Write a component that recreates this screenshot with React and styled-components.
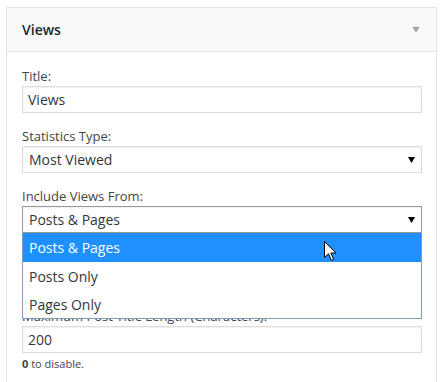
import React from "react";
import styled, { createGlobalStyle } from "styled-components";

const GlobalStyle = createGlobalStyle`
  html, body {
    margin: 0;
    padding: 0;
    background: #ffffff;
  }
  body {
    font-family: "Open Sans", "Noto Sans", sans-serif;
    color: #32373c;
    overflow: hidden;
  }
`;

const Caret = ({ color = "#000", width = 7, height = 6 }) => (
  <svg width={width} height={height} viewBox="0 0 7 6" aria-hidden="true">
    <path d="M0 0 H7 L3.5 6 Z" fill={color} />
  </svg>
);

const Pointer = () => (
  <svg width="13" height="21" viewBox="0 0 13 21" aria-hidden="true">
    <path
      d="M0.5 0.5 V16.5 L4.5 12.8 L7.3 19.5 L9.6 18.5 L6.9 12 H12 Z"
      fill="#ffffff"
      stroke="#000000"
      strokeWidth="1"
    />
  </svg>
);

export default function App() {
  const options = ["Posts & Pages", "Posts Only", "Pages Only"];
  return (
    <>
      <GlobalStyle />
      <Widget>
        <Header>
          <HeaderTitle>Views</HeaderTitle>
          <Caret color="#a0a5aa" width={8} height={6} />
        </Header>
        <Body>
          <Field>
            <Label>Title:</Label>
            <TextInput>Views</TextInput>
          </Field>
          <Field>
            <Label>Statistics Type:</Label>
            <Select>
              <span>Most Viewed</span>
              <Caret />
            </Select>
          </Field>
          <Field>
            <Label>Include Views From:</Label>
            <SelectWrap>
              <Select $focused>
                <span>Posts &amp; Pages</span>
                <Caret />
              </Select>
              <Dropdown>
                {options.map((o, i) => (
                  <Option key={o} $active={i === 0}>
                    {o}
                  </Option>
                ))}
                <CursorSpot>
                  <Pointer />
                </CursorSpot>
              </Dropdown>
            </SelectWrap>
          </Field>
          {/* covered by the open dropdown */}
          <Field $covered>
            <Label>No. Of Records To Show:</Label>
            <TextInput>10</TextInput>
          </Field>
          <Field>
            <Label>Maximum Post Title Length (Characters):</Label>
            <TextInput>200</TextInput>
            <Hint>
              <b>0</b> to disable.
            </Hint>
          </Field>
        </Body>
      </Widget>
    </>
  );
}

const Widget = styled.div`
  margin: 7px 0 0 6px;
  width: 431px;
  box-sizing: border-box;
  border: 1px solid #e5e5e5;
  background: #ffffff;
`;

const Header = styled.div`
  height: 43px;
  display: flex;
  align-items: center;
  justify-content: space-between;
  padding: 0 16px 0 15px;
  background: #f9f9f9;
  border-bottom: 1px solid #e5e5e5;
`;

const HeaderTitle = styled.h3`
  margin: 0;
  font-size: 14px;
  font-weight: 600;
  color: #23282d;
  line-height: 19px;
`;

const Body = styled.div`
  padding: 15px 14px 40px 15px;
`;

const Field = styled.div`
  margin-bottom: 14px;
  visibility: ${(p) => (p.$covered ? "hidden" : "visible")};
`;

const Label = styled.label`
  display: block;
  font-size: 13px;
  line-height: 19px;
  color: #444444;
`;

const TextInput = styled.div`
  height: 27px;
  box-sizing: border-box;
  border: 1px solid #dddddd;
  box-shadow: inset 0 1px 2px rgba(0, 0, 0, 0.07);
  padding: 0 5px;
  font-size: 14px;
  line-height: 25px;
  color: #32373c;
`;

const SelectWrap = styled.div`
  position: relative;
`;

const Select = styled.div`
  height: 27px;
  box-sizing: border-box;
  display: flex;
  align-items: center;
  justify-content: space-between;
  border: 1px solid ${(p) => (p.$focused ? "#999999" : "#dddddd")};
  box-shadow: inset 0 1px 2px rgba(0, 0, 0, 0.07);
  padding: 0 6px;
  font-size: 14px;
  color: #32373c;
`;

const Dropdown = styled.ul`
  position: absolute;
  top: 100%;
  left: 0;
  right: 0;
  margin: -1px 0 0;
  padding: 0;
  list-style: none;
  background: #ffffff;
  border: 1px solid #7f9db9;
  border-top: 1px solid #999999;
  z-index: 10;
`;

const Option = styled.li`
  height: 28px;
  display: flex;
  align-items: center;
  padding: 0 6px;
  font-size: 14px;
  color: ${(p) => (p.$active ? "#ffffff" : "#32373c")};
  background: ${(p) => (p.$active ? "#1e90ff" : "transparent")};
  &:first-child {
    height: 29px;
  }
`;

const CursorSpot = styled.div`
  position: absolute;
  left: 301px;
  top: 8px;
  line-height: 0;
`;

const Hint = styled.p`
  margin: 3px 0 0;
  font-size: 11px;
  line-height: 16px;
  color: #444444;
  b {
    font-weight: 700;
  }
`;
